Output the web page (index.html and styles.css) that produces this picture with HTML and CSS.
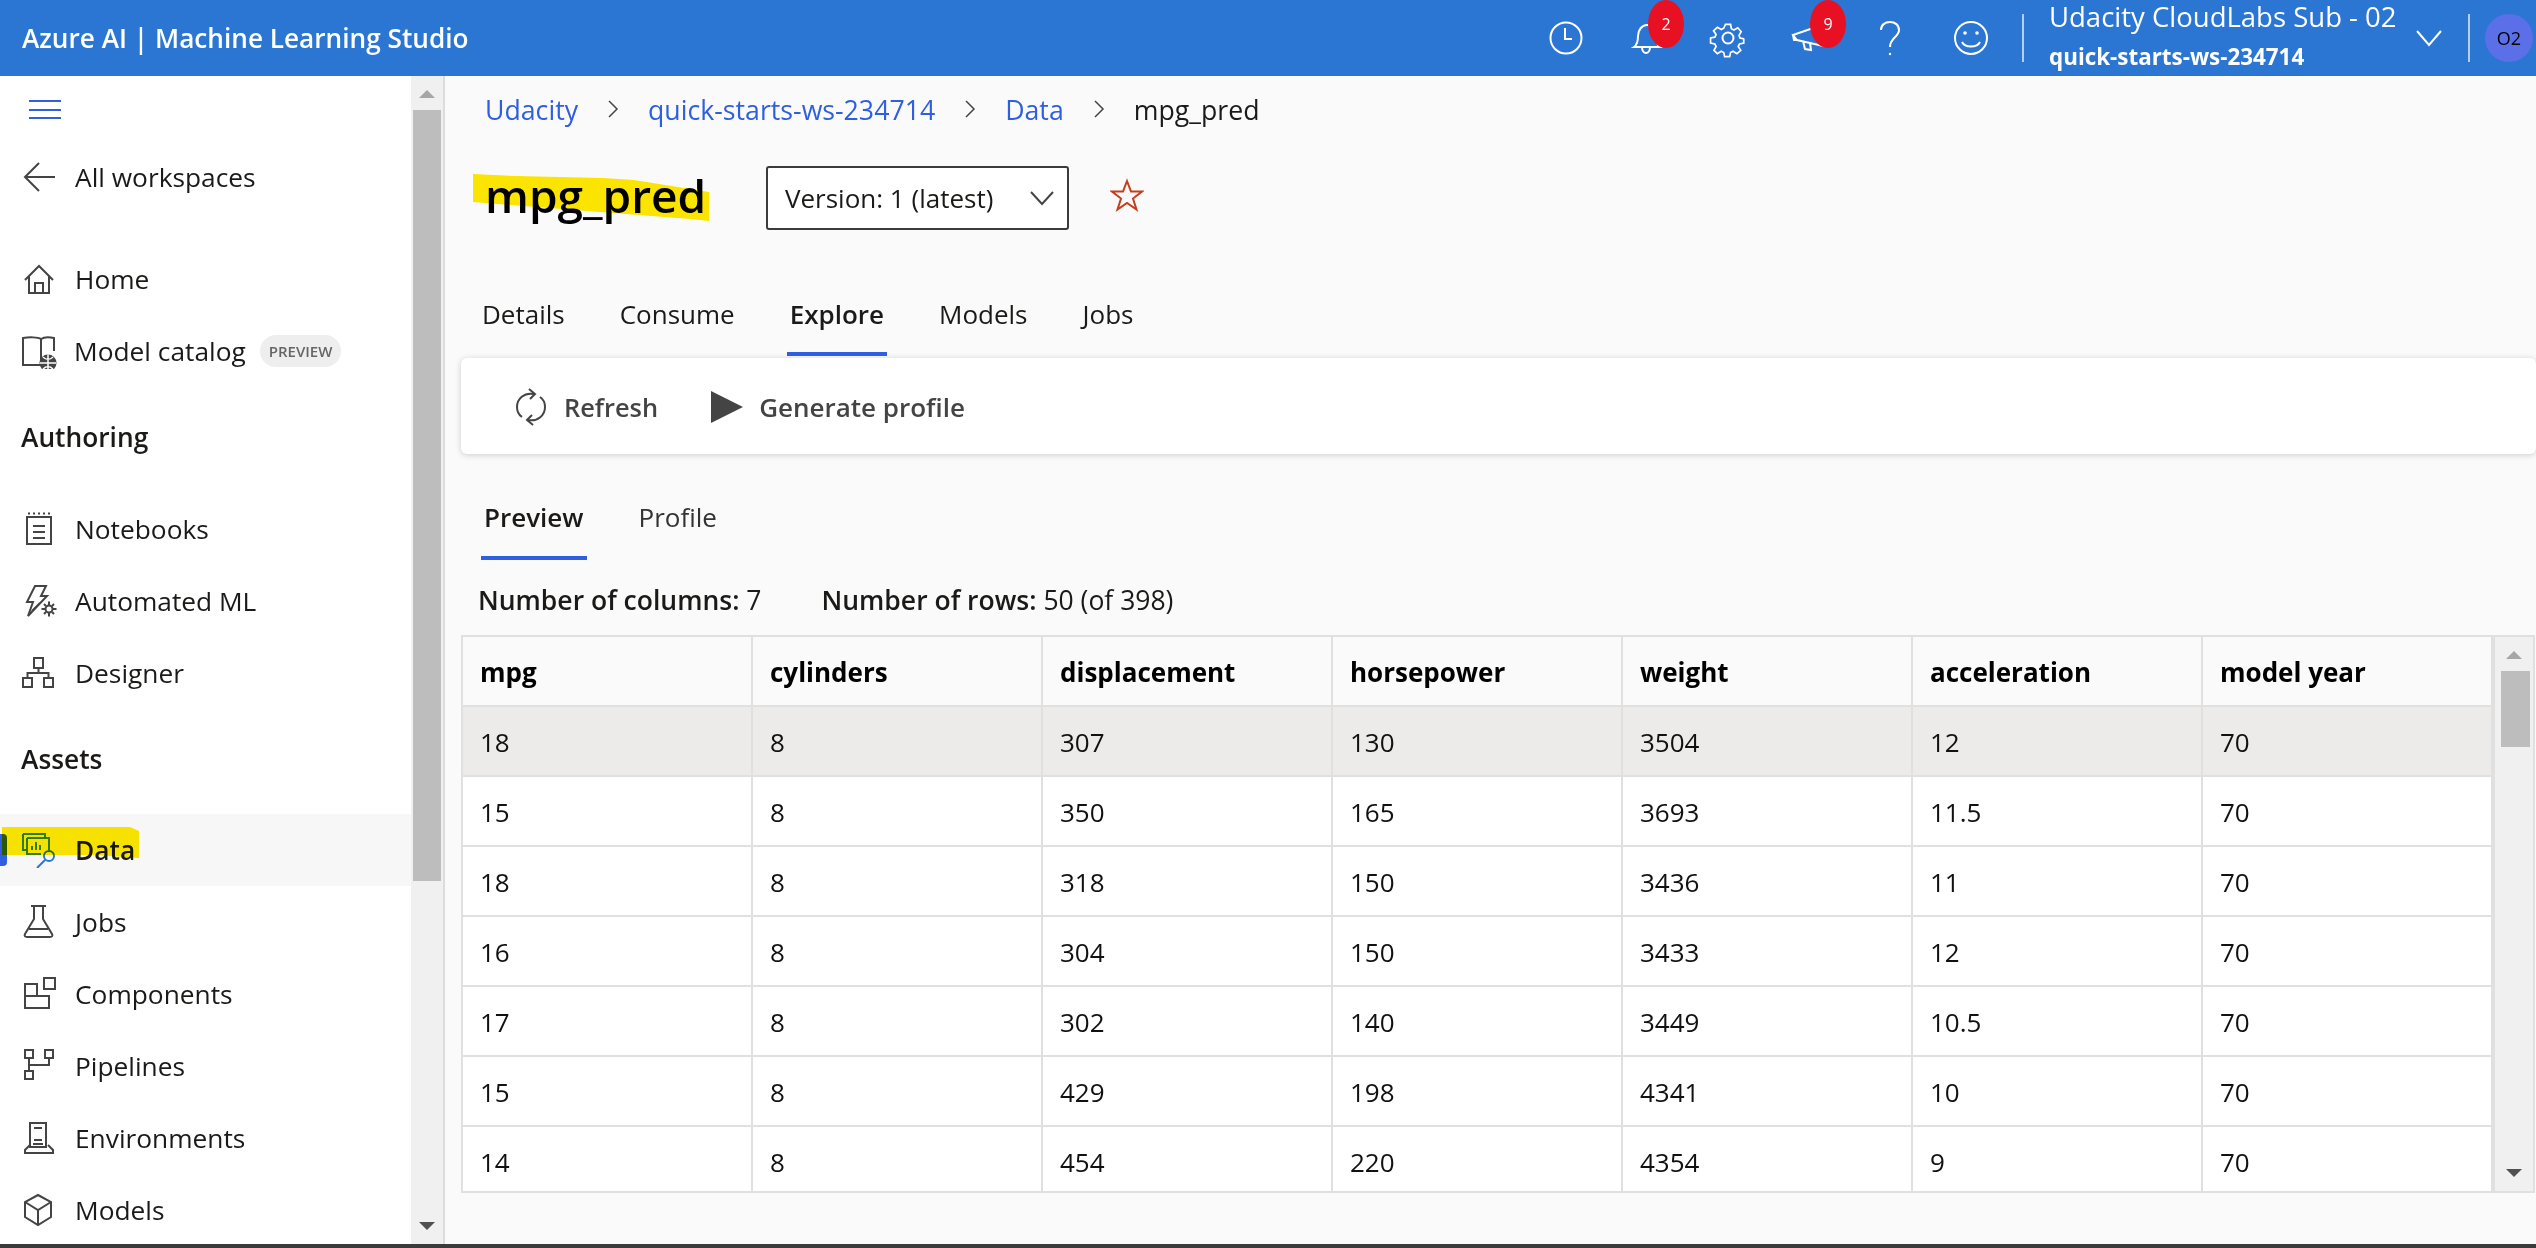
FILE: index.html
```html
<!doctype html>
<html lang="en">
<head>
<meta charset="utf-8">
<title>mpg_pred - Azure AI | Machine Learning Studio</title>
<link rel="stylesheet" href="styles.css">
</head>
<body>
<header class="topbar">
  <div class="brand">Azure AI | Machine Learning Studio</div>
  <div class="tool">
    <svg width="40" height="40" viewBox="0 0 40 40"><circle cx="20" cy="20" r="15.5"/><path d="M19 10v11h7"/></svg>
  </div>
  <div class="tool">
    <svg width="40" height="40" viewBox="0 0 40 40"><path d="M7 29c3-2 4-5 4-11 0-6 4-11 9-11s9 5 9 11c0 6 1 9 4 11zM15 29c0 4 2 6 4 6s4-2 4-6"/></svg>
    <span class="badge">2</span>
  </div>
  <div class="tool">
    <svg width="40" height="40" viewBox="0 0 40 40"><circle cx="20" cy="20" r="5.5"/><path d="M17 4h6l1 5 3 1.500 4.500-2.500 4 4.500-2.500 4.500 1 3 5 1v0l-.5 0v5l-5 1-1.500 3 3 4.500-4.500 4-4.500-3-3 1.500-1 5h-6l-1-5-3-1.500-4.500 3-4-4 2.500-4.500-1.500-3-5-1v-6l5-1 1.500-3-3-4.500 4.500-4 4.500 2.500 3-1.500z" transform="translate(3 3) scale(.85)"/></svg>
  </div>
  <div class="tool">
    <svg width="40" height="40" viewBox="0 0 40 40"><path d="M4 17l26-9 4 20-26-6zM4 17l1 5 3 0M14 23l2 8 6 1-1-7"/></svg>
    <span class="badge">9</span>
  </div>
  <div class="tool">
    <svg width="40" height="40" viewBox="0 0 40 40"><path d="M11 12c0-5 4-8 9-8s9 3 9 8c0 7-9 8-9 17"/><circle class="dot" cx="20" cy="36" r="1.200"/></svg>
  </div>
  <div class="tool">
    <svg width="40" height="40" viewBox="0 0 40 40"><circle cx="20" cy="20" r="16"/><circle class="dot" cx="14" cy="15" r="1.800"/><circle class="dot" cx="26" cy="15" r="1.800"/><path d="M11 24c3 6 15 6 18 0"/></svg>
  </div>
  <span class="topbar-sep"></span>
  <div class="account">
    <div class="account-sub">Udacity CloudLabs Sub - 02</div>
    <div class="account-ws">quick-starts-ws-234714</div>
  </div>
  <svg class="account-chevron" width="40" height="40" viewBox="0 0 40 40"><path d="M8 13l12 14 12-14"/></svg>
  <span class="topbar-sep topbar-sep-2"></span>
  <div class="avatar">O2</div>
</header>

<div class="page">
  <aside class="sidebar">
    <nav class="nav">
      <div class="hamburger"><span></span><span></span><span></span></div>
      <a class="nav-item nav-back">
        <svg width="36" height="36" viewBox="0 0 36 36"><path d="M33 18H3M17 4L3 18l14 14"/></svg>
        <span>All workspaces</span>
      </a>
      <a class="nav-item nav-home">
        <svg width="36" height="36" viewBox="0 0 36 36"><path d="M3 19L17 5l14 14M7 15v17h20V15M13 32V22h8v10"/></svg>
        <span>Home</span>
      </a>
      <a class="nav-item nav-catalog">
        <svg width="36" height="36" viewBox="0 0 36 36"><path d="M19 6c-3-2-12-2-18-1v27h18V6zM19 6c3-2 8-2 13-1v13"/><circle class="solid" cx="26" cy="30" r="8.500"/><path class="cut" d="M26 21.500v17M18 30h16M21 24c3 3 7 3 10 0M21 36c3-3 7-3 10 0"/></svg>
        <span>Model catalog</span>
        <span class="preview">PREVIEW</span>
      </a>
      <div class="nav-group">Authoring</div>
      <a class="nav-item nav-after-group">
        <svg width="36" height="36" viewBox="0 0 36 36"><path d="M5 6h24v27H5zM11 15h12M11 21h12M11 27h12"/><path class="dash" d="M6 2.500h22"/></svg>
        <span>Notebooks</span>
      </a>
      <a class="nav-item">
        <svg width="36" height="36" viewBox="0 0 36 36"><path d="M13 3h11l-5 10h6L6 33l5-14H5z M10 28l8-8"/><circle cx="27" cy="26" r="3.500"/><path d="M27 18.500v3.500M27 30v3.500M19.500 26H23M31 26h3.500M22 21l2 2M30 29l2 2M32 21l-2 2M24 29l-2 2"/></svg>
        <span>Automated ML</span>
      </a>
      <a class="nav-item">
        <svg width="36" height="36" viewBox="0 0 36 36"><path d="M12 3h9v10h-9zM1 23h9v9H1zM22 23h9v9h-9zM16.500 13v5M5.500 23v-5h21v5"/></svg>
        <span>Designer</span>
      </a>
      <div class="nav-group">Assets</div>
      <a class="nav-item nav-active nav-data">
        <svg width="36" height="36" viewBox="0 0 36 36"><path class="green" d="M1 2h22v4M1 2v16h4M5 6h22v12M5 6v16h14M10 18v-4M14 18v-8M18 18v-5"/><circle class="blue" cx="27" cy="24" r="5"/><path class="blue" d="M23 28L15 36"/></svg>
        <span>Data</span>
        <svg class="marker marker-data" width="140" height="34" viewBox="0 0 140 34"><polygon points="2,1 130,1 139,5 139,32 95,29 2,29"/></svg>
      </a>
      <a class="nav-item">
        <svg width="36" height="36" viewBox="0 0 36 36"><path d="M9 2h15M12 2v13L3 30c-1 2 0 3 2 3h23c2 0 3-1 2-3l-9-15V2M7 25h19"/></svg>
        <span>Jobs</span>
      </a>
      <a class="nav-item">
        <svg width="36" height="36" viewBox="0 0 36 36"><path d="M3 8h12v12H3zM15 8v12h12v12H3V20M22 2h11v11H22z"/></svg>
        <span>Components</span>
      </a>
      <a class="nav-item">
        <svg width="36" height="36" viewBox="0 0 36 36"><path d="M3 2h8v8H3zM23 2h8v8h-8zM3 23h8v8H3zM7 10v13M7 17h20v-7"/></svg>
        <span>Pipelines</span>
      </a>
      <a class="nav-item">
        <svg width="36" height="36" viewBox="0 0 36 36"><path d="M8 3h16v24H8zM12 8h8M12 20h8M11 24h10M8 25l-5 5v3h28v-3l-5-5"/></svg>
        <span>Environments</span>
      </a>
      <a class="nav-item">
        <svg width="36" height="36" viewBox="0 0 36 36"><path d="M16 3l13 7v15l-13 8-13-8V10zM3 10l13 8 13-8M16 18v15"/></svg>
        <span>Models</span>
      </a>
    </nav>
    <div class="scroll scroll-side">
      <span class="arrow-up"></span>
      <span class="thumb thumb-side"></span>
      <span class="arrow-down"></span>
    </div>
  </aside>

  <main class="main">
    <div class="crumbs">
      <a>Udacity</a>
      <svg width="12" height="20" viewBox="0 0 12 20"><path d="M2 2l8 8-8 8"/></svg>
      <a>quick-starts-ws-234714</a>
      <svg width="12" height="20" viewBox="0 0 12 20"><path d="M2 2l8 8-8 8"/></svg>
      <a>Data</a>
      <svg width="12" height="20" viewBox="0 0 12 20"><path d="M2 2l8 8-8 8"/></svg>
      <span>mpg_pred</span>
    </div>

    <div class="title-row">
      <h1>mpg_pred</h1>
      <svg class="marker marker-title" width="240" height="50" viewBox="0 0 240 50"><polygon points="0,1 43,3 130,5 161,7 236,19 236,48 217,46 127,39 0,29"/></svg>
      <div class="version">
        <span>Version: 1 (latest)</span>
        <svg width="26" height="16" viewBox="0 0 26 16"><path d="M2 2l11 12L24 2"/></svg>
      </div>
      <svg class="star" width="34" height="34" viewBox="0 0 34 34"><path d="M17 3l4 10.500h11l-9 7 3.500 11L17 25l-9.500 6.500 3.500-11-9-7h11z"/></svg>
    </div>

    <div class="tabs">
      <a>Details</a>
      <a>Consume</a>
      <a class="tab-on">Explore</a>
      <a>Models</a>
      <a>Jobs</a>
    </div>

    <div class="toolbar">
      <a class="tool-btn">
        <svg width="32" height="38" viewBox="0 0 32 38"><path d="M19 6C9 4 2 11 2 19c0 4 2 8 5 10M13 32c10 2 17-5 17-13 0-4-2-8-5-10M14 1l6 5-5 5M18 37l-6-5 5-5"/></svg>
        <span>Refresh</span>
      </a>
      <a class="tool-btn">
        <svg width="34" height="34" viewBox="0 0 34 34"><polygon class="play" points="1,1 33,17 1,33"/></svg>
        <span>Generate profile</span>
      </a>
    </div>

    <div class="subtabs">
      <a class="tab-on">Preview</a>
      <a>Profile</a>
    </div>

    <div class="stats">
      <span><b>Number of columns:</b> 7</span>
      <span><b>Number of rows:</b> 50 (of 398)</span>
    </div>

    <div class="grid-wrap">
      <table class="grid">
        <thead>
          <tr><th>mpg</th><th>cylinders</th><th>displacement</th><th>horsepower</th><th>weight</th><th>acceleration</th><th>model year</th></tr>
        </thead>
        <tbody>
          <tr class="row-hover"><td>18</td><td>8</td><td>307</td><td>130</td><td>3504</td><td>12</td><td>70</td></tr>
          <tr><td>15</td><td>8</td><td>350</td><td>165</td><td>3693</td><td>11.5</td><td>70</td></tr>
          <tr><td>18</td><td>8</td><td>318</td><td>150</td><td>3436</td><td>11</td><td>70</td></tr>
          <tr><td>16</td><td>8</td><td>304</td><td>150</td><td>3433</td><td>12</td><td>70</td></tr>
          <tr><td>17</td><td>8</td><td>302</td><td>140</td><td>3449</td><td>10.5</td><td>70</td></tr>
          <tr><td>15</td><td>8</td><td>429</td><td>198</td><td>4341</td><td>10</td><td>70</td></tr>
          <tr><td>14</td><td>8</td><td>454</td><td>220</td><td>4354</td><td>9</td><td>70</td></tr>
        </tbody>
      </table>
      <div class="scroll scroll-grid">
        <span class="arrow-up"></span>
        <span class="thumb thumb-grid"></span>
        <span class="arrow-down"></span>
      </div>
    </div>
  </main>
</div>
</body>
</html>
```

FILE: styles.css
```css
* {
  box-sizing: border-box;
}

html, body {
  width: 100%;
  height: 100%;
  margin: 0;
  padding: 0;
  overflow: hidden;
}

body {
  display: flex;
  flex-direction: column;
  background-color: #fafafa;
  color: #1b1a19;
  font-family: "Open Sans", "Noto Sans", sans-serif;
  font-size: 26px;
  border-bottom: 4px solid #3b3b3b;
}

svg {
  flex: none;
  fill: none;
  stroke: #444;
  stroke-width: 2;
}

/* top bar */
.topbar {
  flex: none;
  height: 76px;
  display: flex;
  align-items: center;
  background-color: #2b76d3;
  color: white;
  padding-right: 3px;
}
.topbar svg {
  stroke: white;
}
.topbar .dot {
  fill: white;
  stroke: none;
}
.brand {
  flex: 1;
  padding-left: 22px;
  font-size: 26.200px;
  font-weight: 600;
}
.tool {
  position: relative;
  width: 81px;
  height: 76px;
  display: flex;
  align-items: center;
  justify-content: center;
}
.badge {
  position: absolute;
  top: 0;
  left: 42px;
  width: 36px;
  height: 48px;
  border-radius: 50%;
  background-color: #e81123;
  font-size: 16px;
  line-height: 48px;
  text-align: center;
}
.topbar-sep {
  width: 2px;
  height: 48px;
  margin-left: 11px;
  background-color: rgba(255, 255, 255, 0.65);
}
.topbar-sep-2 {
  margin-left: 19px;
}
.account {
  width: 360px;
  margin-left: 25px;
  white-space: nowrap;
}
.account-sub {
  font-size: 27.500px;
  line-height: 36px;
}
.account-ws {
  font-size: 22.400px;
  font-weight: 700;
  line-height: 40px;
  margin-top: 2px;
}
.avatar {
  width: 48px;
  height: 48px;
  margin-left: 15px;
  border-radius: 50%;
  background-color: #5b6fe8;
  color: black;
  font-size: 18px;
  line-height: 48px;
  text-align: center;
}

/* sidebar */
.page {
  flex: 1;
  min-height: 0;
  display: flex;
}
.sidebar {
  flex: none;
  width: 445px;
  display: flex;
  background-color: white;
  overflow: hidden;
}
.nav {
  flex: 1;
  min-width: 0;
  font-size: 26.300px;
}
.hamburger {
  height: 66px;
  padding: 24px 0 0 29px;
}
.hamburger span {
  display: block;
  width: 32px;
  height: 2px;
  margin-bottom: 6.500px;
  background-color: #2f5ede;
}
.nav-item {
  position: relative;
  height: 72px;
  display: flex;
  align-items: center;
  gap: 17px;
  padding-left: 22px;
  white-space: nowrap;
}
.nav-back {
  height: 70px;
}
.nav-home {
  margin-top: 31px;
}
.nav-catalog span:first-of-type {
  margin-left: -1px;
}
.preview {
  height: 32px;
  margin-left: -3px;
  padding: 0 9px;
  border-radius: 16px;
  background-color: #eeeeee;
  color: #666;
  font-size: 15px;
  font-weight: 600;
  line-height: 32px;
}
.nav-group {
  height: 72px;
  margin-top: 14px;
  padding-left: 21px;
  font-weight: 600;
  line-height: 72px;
}
.nav-after-group {
  margin-top: 20px;
}
.nav-data {
  margin-top: 19px;
  background-color: #f7f7f7;
  font-weight: 600;
}
.nav-active::before {
  content: "";
  position: absolute;
  left: 0;
  top: 20px;
  width: 7px;
  height: 32px;
  border-radius: 0 4px 4px 0;
  background-color: #2f5ede;
}
.solid {
  fill: #444;
  stroke: none;
}
.cut {
  stroke: white;
  stroke-width: 1.500;
}
.dash {
  stroke-dasharray: 2 3;
}
.green {
  stroke: #2f8a2f;
}
.blue {
  stroke: #2b76d3;
}

/* yellow pen marks drawn on the screenshot */
.marker {
  position: absolute;
  stroke: none;
  fill: #ffe900;
  mix-blend-mode: multiply;
}
.marker-data {
  left: 0;
  top: 12px;
}
.marker-title {
  left: 12px;
  top: 7px;
}

/* scroll bars */
.scroll {
  flex: none;
  position: relative;
  background-color: #f0f0f0;
}
.scroll-side {
  width: 34px;
  border-right: 2px solid #dcdcdc;
  padding: 34px 2px 0;
}
.scroll-grid {
  width: 40px;
  padding: 34px 3px 0 6px;
  border-left: 2px solid #e0e0e0;
}
.thumb {
  display: block;
  background-color: #bdbdbd;
}
.thumb-side {
  height: 771px;
}
.thumb-grid {
  height: 76px;
}
.arrow-up, .arrow-down {
  position: absolute;
  left: 50%;
  margin-left: -8px;
  border-left: 8px solid transparent;
  border-right: 8px solid transparent;
}
.arrow-up {
  top: 14px;
  border-bottom: 8px solid #a6a6a6;
}
.arrow-down {
  bottom: 14px;
  border-top: 8px solid #505050;
}

/* main area */
.main {
  flex: 1;
  min-width: 0;
  padding-left: 16px;
}
.crumbs {
  height: 66px;
  margin-bottom: 2px;
  display: flex;
  align-items: center;
  gap: 29px;
  padding-left: 24px;
  font-size: 26.700px;
}
.crumbs a {
  color: #2f5ede;
}
.crumbs svg {
  stroke-width: 1.500;
}
.title-row {
  position: relative;
  display: flex;
  align-items: center;
  height: 64px;
  margin-top: 24px;
  padding-left: 24px;
}
h1 {
  width: 281px;
  margin: 0 0 6px;
  color: black;
  font-size: 46px;
  font-weight: 600;
  white-space: nowrap;
}
.version {
  width: 303px;
  height: 64px;
  display: flex;
  align-items: center;
  justify-content: space-between;
  padding: 0 12px 0 17px;
  border: 2px solid #3b3b3b;
  border-radius: 3px;
  background-color: white;
}
.star {
  margin: 0 0 6px 41px;
  stroke: #c43e1c;
}
.tabs {
  display: flex;
  gap: 49px;
  height: 80px;
  margin-top: 46px;
  padding-left: 18px;
}
.tabs a, .subtabs a {
  height: 100%;
  padding: 0 3px;
  line-height: 76px;
  border-bottom: 4px solid transparent;
}
.tabs .tab-on, .subtabs .tab-on {
  font-weight: 600;
  border-bottom-color: #2f5ede;
}
.toolbar {
  height: 96px;
  width: 2075px;
  display: flex;
  align-items: center;
  gap: 50px;
  margin-top: 2px;
  padding: 2px 0 0 54px;
  border-radius: 6px;
  background-color: white;
  box-shadow: 0 1px 6px rgba(0, 0, 0, 0.18);
  color: #444;
  font-weight: 600;
}
.tool-btn {
  display: flex;
  align-items: center;
  gap: 17px;
}
.tool-btn:first-child {
  font-size: 25.400px;
  margin-right: 2px;
}
.tool-btn:last-child {
  gap: 15px;
}
.play {
  fill: #444;
  stroke: none;
}
.subtabs {
  display: flex;
  gap: 49px;
  height: 82px;
  margin-top: 24px;
  padding-left: 20px;
}
.subtabs a {
  line-height: 78px;
  color: #333;
}
.subtabs .tab-on {
  color: #1b1a19;
}
.stats {
  height: 40px;
  display: flex;
  gap: 60px;
  margin-top: 20px;
  padding-left: 17px;
  font-size: 26.500px;
  line-height: 40px;
}
.stats b {
  font-weight: 600;
}

/* data table */
.grid-wrap {
  display: flex;
  width: 2074px;
  height: 558px;
  margin-top: 15px;
  border: 2px solid #e0e0e0;
  overflow: hidden;
}
.grid {
  flex: none;
  width: 2030px;
  height: 100%;
  table-layout: fixed;
  border-collapse: separate;
  border-spacing: 0;
  background-color: white;
  color: #111;
}
.grid th, .grid td {
  height: 70px;
  padding: 2px 0 0 17px;
  border-right: 2px solid #e0e0e0;
  border-bottom: 2px solid #e0e0e0;
  font-size: 26px;
  font-weight: 400;
  text-align: left;
}
.grid th {
  background-color: #fafafa;
  color: black;
  font-weight: 700;
}
.grid tbody tr:last-child td {
  height: 68px;
  border-bottom: 0;
}
.row-hover td {
  background-color: #ecebea;
}
```
